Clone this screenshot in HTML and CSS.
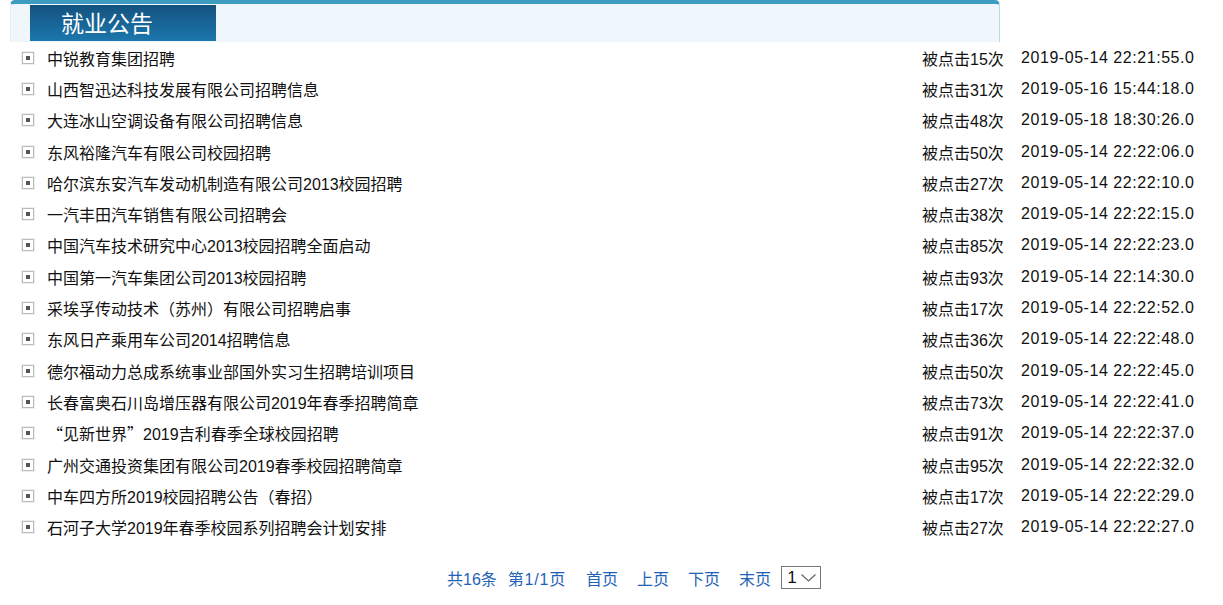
FILE: index.html
```html
<!DOCTYPE html>
<html lang="zh-CN">
<head>
    <meta charset="UTF-8">
    <title>就业公告</title>
    <link rel="stylesheet" href="styles.css">
</head>
<body>
    <div class="panel">
        <div class="tab">就业公告</div>
    </div>

    <ul class="news">
        <li><a href="#">中锐教育集团招聘</a><span class="hits">被点击15次</span><span class="date">2019-05-14 22:21:55.0</span></li>
        <li><a href="#">山西智迅达科技发展有限公司招聘信息</a><span class="hits">被点击31次</span><span class="date">2019-05-16 15:44:18.0</span></li>
        <li><a href="#">大连冰山空调设备有限公司招聘信息</a><span class="hits">被点击48次</span><span class="date">2019-05-18 18:30:26.0</span></li>
        <li><a href="#">东风裕隆汽车有限公司校园招聘</a><span class="hits">被点击50次</span><span class="date">2019-05-14 22:22:06.0</span></li>
        <li><a href="#">哈尔滨东安汽车发动机制造有限公司2013校园招聘</a><span class="hits">被点击27次</span><span class="date">2019-05-14 22:22:10.0</span></li>
        <li><a href="#">一汽丰田汽车销售有限公司招聘会</a><span class="hits">被点击38次</span><span class="date">2019-05-14 22:22:15.0</span></li>
        <li><a href="#">中国汽车技术研究中心2013校园招聘全面启动</a><span class="hits">被点击85次</span><span class="date">2019-05-14 22:22:23.0</span></li>
        <li><a href="#">中国第一汽车集团公司2013校园招聘</a><span class="hits">被点击93次</span><span class="date">2019-05-14 22:14:30.0</span></li>
        <li><a href="#">采埃孚传动技术（苏州）有限公司招聘启事</a><span class="hits">被点击17次</span><span class="date">2019-05-14 22:22:52.0</span></li>
        <li><a href="#">东风日产乘用车公司2014招聘信息</a><span class="hits">被点击36次</span><span class="date">2019-05-14 22:22:48.0</span></li>
        <li><a href="#">德尔福动力总成系统事业部国外实习生招聘培训项目</a><span class="hits">被点击50次</span><span class="date">2019-05-14 22:22:45.0</span></li>
        <li><a href="#">长春富奥石川岛增压器有限公司2019年春季招聘简章</a><span class="hits">被点击73次</span><span class="date">2019-05-14 22:22:41.0</span></li>
        <li><a href="#"><span class="cjk">“</span>见新世界<span class="cjk">”</span>2019吉利春季全球校园招聘</a><span class="hits">被点击91次</span><span class="date">2019-05-14 22:22:37.0</span></li>
        <li><a href="#">广州交通投资集团有限公司2019春季校园招聘简章</a><span class="hits">被点击95次</span><span class="date">2019-05-14 22:22:32.0</span></li>
        <li><a href="#">中车四方所2019校园招聘公告（春招）</a><span class="hits">被点击17次</span><span class="date">2019-05-14 22:22:29.0</span></li>
        <li><a href="#">石河子大学2019年春季校园系列招聘会计划安排</a><span class="hits">被点击27次</span><span class="date">2019-05-14 22:22:27.0</span></li>
    </ul>

    <div class="pager">
        <span class="total">共16条</span>
        <span class="pages">第1/1页</span>
        <a href="#">首页</a>
        <a href="#">上页</a>
        <a href="#">下页</a>
        <a href="#" class="last">末页</a>
        <div class="jump">
            <span>1</span>
            <svg width="17" height="10" viewBox="0 0 17 10"><path d="M1.5 1.5 L8.5 8 L15.5 1.5" fill="none" stroke="#666" stroke-width="1.2"/></svg>
        </div>
    </div>
</body>
</html>
```

FILE: styles.css
```css
body {
    margin: 0;
    font-family: "Liberation Sans", "Noto Sans CJK SC", sans-serif;
    font-size: 16px;
    color: #111;
    background: #fff;
}
a {
    color: inherit;
    text-decoration: none;
}
.cjk {
    font-family: "Noto Sans CJK SC", sans-serif;
}
.panel {
    margin-left: 10px;
    width: 969px;
    height: 38px;
    border-top: 4px solid #3d9cbf;
    border-right: 1px solid #b9d9ec;
    border-left: 1px solid #e3eef6;
    border-radius: 5px 5px 0 0;
    background: #eff6fc;
    padding-left: 19px;
}
.tab {
    width: 186px;
    height: 36px;
    margin-top: 1px;
    background: linear-gradient(#14527f, #1c77ad);
    color: #fff;
    font-size: 23px;
    line-height: 39px;
    padding-left: 31px;
    box-sizing: border-box;
}
.news {
    list-style: none;
    margin: 0;
    padding: 0 29px 0 22px;
}
.news li {
    display: flex;
    align-items: center;
    height: 31.3px;
}
.news li::before {
    content: "";
    width: 4px;
    height: 4px;
    background: #555;
    border: 3px solid #fff;
    outline: 1px solid #bbb;
    box-shadow: 0 0 0 2px #eee;
    margin: 0 14px 0 1px;
    flex-shrink: 0;
}
.news a {
    flex: 1;
}
.hits {
    width: 99px;
}
.date {
    letter-spacing: 0.55px;
    margin-right: -0.5px;
}
.pager {
    display: flex;
    align-items: center;
    margin: 23px 0 0 447px;
    color: #1f62b8;
    height: 24px;
}
.pager span, .pager a {
    margin-right: 19px;
}
.pager .total {
    margin-right: 11px;
}
.pager .pages {
    letter-spacing: 0.8px;
    margin-right: 20px;
}
.pager .last {
    margin-right: 10px;
}
.jump {
    display: flex;
    align-items: center;
    justify-content: space-between;
    width: 40px;
    height: 23px;
    border: 1px solid #777;
    box-sizing: border-box;
    padding: 0 3px 0 5px;
    color: #111;
    font-size: 17px;
}
.jump span {
    margin: 0;
}
```
